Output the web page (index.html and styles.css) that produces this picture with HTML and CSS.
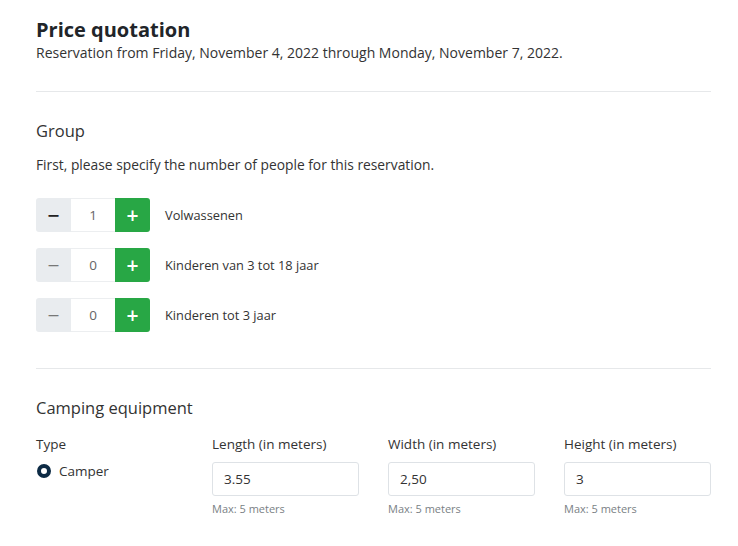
FILE: index.html
```html
<!DOCTYPE html>
<html lang="en">
<head>
  <meta charset="UTF-8">
  <meta name="viewport" content="width=device-width, initial-scale=1.0">
  <title>Price quotation</title>
  <link rel="stylesheet" href="styles.css">
</head>
<body>
  <main class="page">
    <header class="intro">
      <h1>Price quotation</h1>
      <p>Reservation from Friday, November 4, 2022 through Monday, November 7, 2022.</p>
    </header>

    <section class="block">
      <h2>Group</h2>
      <p class="lead">First, please specify the number of people for this reservation.</p>
      <div class="counter">
        <div class="stepper">
          <button class="minus">&minus;</button>
          <input type="text" value="1">
          <button class="plus">+</button>
        </div>
        <span>Volwassenen</span>
      </div>
      <div class="counter">
        <div class="stepper">
          <button class="minus off">&minus;</button>
          <input type="text" value="0">
          <button class="plus">+</button>
        </div>
        <span>Kinderen van 3 tot 18 jaar</span>
      </div>
      <div class="counter">
        <div class="stepper">
          <button class="minus off">&minus;</button>
          <input type="text" value="0">
          <button class="plus">+</button>
        </div>
        <span>Kinderen tot 3 jaar</span>
      </div>
    </section>

    <section class="block">
      <h2>Camping equipment</h2>
      <div class="fields">
        <div class="field">
          <label>Type</label>
          <div class="radio"><span class="dot"></span>Camper</div>
        </div>
        <div class="field">
          <label>Length (in meters)</label>
          <input type="text" value="3.55">
          <small>Max: 5 meters</small>
        </div>
        <div class="field">
          <label>Width (in meters)</label>
          <input type="text" value="2,50">
          <small>Max: 5 meters</small>
        </div>
        <div class="field">
          <label>Height (in meters)</label>
          <input type="text" value="3">
          <small>Max: 5 meters</small>
        </div>
      </div>
    </section>
  </main>
</body>
</html>
```

FILE: styles.css
```css
body {
  margin: 0;
  font-family: "Open Sans", sans-serif;
  background-color: #fff;
  color: #333;
}

.page {
  width: 675px;
  padding: 17px 0 0 36px;
}

.intro {
  padding-bottom: 28px;
  border-bottom: 1px solid #e6e8ea;
}

.intro h1 {
  margin: 0;
  font-size: 20px;
  font-weight: 700;
  color: #212529;
  line-height: 26px;
}

.intro p {
  margin: 0;
  font-size: 14px;
  line-height: 20px;
}

.block {
  padding-top: 28px;
  padding-bottom: 20px;
  border-bottom: 1px solid #e6e8ea;
}

.block:last-child {
  border-bottom: none;
}

.block h2 {
  margin: 0;
  font-size: 16.5px;
  font-weight: 400;
  color: #333;
  line-height: 22px;
}

.lead {
  margin: 13px 0 23px;
  font-size: 13.8px;
  line-height: 20px;
}

.counter {
  display: flex;
  align-items: center;
  gap: 15px;
  margin-bottom: 16px;
  font-size: 12.8px;
}

.stepper {
  display: flex;
  height: 34px;
  border-radius: 3px;
  overflow: hidden;
}

.stepper button {
  width: 35px;
  border: none;
  font-size: 21px;
  font-weight: 600;
  font-family: inherit;
  padding: 0;
}

.stepper .minus {
  background-color: #e9ecef;
  color: #222;
}

.stepper .minus.off {
  color: #777;
  font-weight: 400;
}

.stepper .plus {
  background-color: #28a745;
  color: #fff;
}

.stepper input {
  width: 44px;
  border: 1px solid #eceef0;
  border-left: none;
  border-right: none;
  padding: 0;
  text-align: center;
  font-family: inherit;
  font-size: 13.5px;
  color: #666;
  background: #fff;
}

.fields {
  display: grid;
  grid-template-columns: repeat(4, 176px);
  margin-top: 15px;
}

.field label {
  display: block;
  font-size: 13.5px;
  line-height: 20px;
  margin-bottom: 8px;
}

.field input {
  width: 147px;
  height: 34px;
  box-sizing: border-box;
  border: 1px solid #dee2e6;
  border-radius: 3px;
  padding: 0 11px;
  font-family: inherit;
  font-size: 13.5px;
  color: #333;
}

.field small {
  display: block;
  margin-top: 5px;
  font-size: 11px;
  color: #7a7f85;
}

.radio {
  display: flex;
  align-items: center;
  gap: 8px;
  font-size: 13.5px;
  margin-top: 2px;
  padding-left: 1px;
}

.dot {
  width: 6px;
  height: 6px;
  border: 4px solid #0d2b45;
  border-radius: 50%;
  background-color: #fff;
}
```
